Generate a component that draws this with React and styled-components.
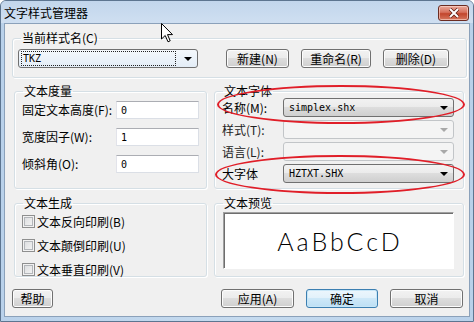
import styled, { createGlobalStyle } from "styled-components";

const GlobalStyle = createGlobalStyle`
  html, body {
    margin: 0;
    padding: 0;
    background: #ffffff;
  }
  body {
    font-family: "Noto Sans CJK SC", "Liberation Sans", sans-serif;
    font-size: 12px;
    color: #000;
  }
  * {
    box-sizing: border-box;
  }
`;

const Window = styled.div`
  position: relative;
  width: 474px;
  height: 322px;
  display: flex;
  flex-direction: column;
  background: linear-gradient(90deg, #b9d1ea, #c6dbef 50%, #b9d1ea);
  border: 1px solid #5d7590;
  border-radius: 6px 6px 0 0;
  overflow: hidden;
`;

const TitleBar = styled.div`
  height: 22px;
  flex-shrink: 0;
  display: flex;
  align-items: center;
  justify-content: space-between;
  padding: 0 4px 0 3px;
  background: linear-gradient(#c2d6ec, #cfdff1);
`;

const Title = styled.span`
  font-size: 12px;
  line-height: 14px;
  margin-top: 2px;
`;

const CloseButton = styled.div`
  width: 31px;
  height: 16px;
  margin-top: 1px;
  display: flex;
  align-items: center;
  justify-content: center;
  border: 1px solid #6b2c22;
  border-radius: 3px;
  background: linear-gradient(#e9a99b, #d7705c 45%, #c2452c 55%, #d6775f);
  box-shadow: inset 0 0 0 1px rgba(255, 220, 210, 0.6);
`;

const Body = styled.div`
  flex: 1;
  margin: 0 3px 4px 3px;
  background: #f0f0f0;
  border: 1px solid #8ba1ba;
  display: flex;
  flex-direction: column;
`;

const Group = styled.fieldset`
  margin: 0;
  padding: 0;
  min-width: 0;
  border: 1px solid #d5dfe5;
  border-radius: 3px;
  box-shadow: inset 1px 1px 0 #ffffff, 1px 1px 0 #ffffff;
`;

const Legend = styled.legend`
  margin-left: 8px;
  padding: 0 1px;
  font-size: 12px;
  line-height: 14px;
`;

const TopGroup = styled(Group)`
  margin: 7px 2px 0 7px;
`;

const TopRow = styled.div`
  display: flex;
  align-items: center;
  padding: 4px 0 9px 5px;
`;

const ButtonCluster = styled.div`
  display: flex;
  gap: ${(p) => p.$gap || 12}px;
  margin-left: ${(p) => p.$ml || 0}px;
`;

const Button = styled.div`
  width: ${(p) => p.$w}px;
  height: 19px;
  display: flex;
  align-items: center;
  justify-content: center;
  font-size: 12px;
  border: 1px solid ${(p) => (p.$default ? "#3c7fb1" : "#707070")};
  border-radius: 3px;
  background: ${(p) =>
    p.$default
      ? "linear-gradient(#ecf6fc, #e1f1fb 49%, #cde8f8 50%, #bddff4)"
      : "linear-gradient(#f2f2f2, #ebebeb 49%, #dddddd 50%, #cfcfcf)"};
  box-shadow: inset 0 0 0 1px ${(p) => (p.$default ? "#c7e6f7" : "#fcfcfc")};
`;

const Combo = styled.div`
  width: ${(p) => p.$w}px;
  height: 19px;
  display: flex;
  align-items: center;
  justify-content: space-between;
  padding: 0 5px 0 ${(p) => p.$pl || 4}px;
  border: 1px solid ${(p) => (p.$disabled ? "#c2c5c8" : "#707070")};
  border-radius: 3px;
  background: ${(p) =>
    p.$disabled
      ? "#f4f4f4"
      : p.$focus
      ? "linear-gradient(#f4f8fc, #e3edf7)"
      : "linear-gradient(#f2f2f2, #ebebeb 49%, #dddddd 50%, #cfcfcf)"};
`;

const ComboText = styled.span`
  font-family: "DejaVu Sans Mono", "Liberation Mono", monospace;
  font-size: 10px;
  line-height: 13px;
`;

const FocusText = styled(ComboText)`
  flex: 1;
  margin-right: 8px;
  padding-left: 1px;
  border: 1px dotted #222;
`;

const Arrow = styled.span`
  width: 0;
  height: 0;
  border-left: 4px solid transparent;
  border-right: 4px solid transparent;
  border-top: 4px solid ${(p) => (p.$disabled ? "#a8a8a8" : "#000")};
`;

const Columns = styled.div`
  display: flex;
  gap: 7px;
  margin: ${(p) => p.$mt}px 5px 0 9px;
`;

const LeftGroup = styled(Group)`
  width: 193px;
  flex-shrink: 0;
`;

const RightWrap = styled.div`
  position: relative;
  flex: 1;
  display: flex;
`;

const RightGroup = styled(Group)`
  flex: 1;
`;

const FieldList = styled.div`
  display: flex;
  flex-direction: column;
  gap: ${(p) => p.$gap}px;
  padding: ${(p) => p.$pad};
`;

const FieldRow = styled.div`
  display: flex;
  align-items: center;
  justify-content: space-between;
  height: ${(p) => p.$h || 18}px;
`;

const Label = styled.span`
  font-size: 12px;
  line-height: 14px;
  color: ${(p) => (p.$muted ? "#222" : "#000")};
`;

const Input = styled.div`
  width: 83px;
  height: 18px;
  display: flex;
  align-items: center;
  padding-left: 4px;
  background: #fff;
  border: 1px solid #dbdfe6;
  border-top-color: #abadb3;
  border-left-color: #e2e3ea;
`;

const CheckRow = styled.div`
  display: flex;
  align-items: center;
  gap: 2px;
  height: 13px;
`;

const CheckBox = styled.span`
  width: 13px;
  height: 13px;
  border: 1px solid #8e8f8f;
  background: linear-gradient(135deg, #d8dadc, #f7f7f7);
  box-shadow: inset 0 0 0 1px #f2f2f2, inset 0 0 0 2px #b3b6ba;
`;

const Preview = styled.div`
  height: 57px;
  margin: 2px 9px 7px 8px;
  display: flex;
  align-items: center;
  justify-content: center;
  background: #fff;
  border: 1px solid #ffffff;
  border-top-color: #a0a0a0;
  border-left-color: #a0a0a0;
  box-shadow: inset 1px 1px 0 #6e6e6e;
`;

const PreviewText = styled.span`
  font-family: Lato, "DejaVu Sans", sans-serif;
  font-weight: 300;
  font-size: 25px;
  letter-spacing: 3px;
  line-height: 28px;
  color: #000;
  padding-left: 3px;
`;

const Ellipse = styled.div`
  position: absolute;
  left: ${(p) => p.$x}px;
  top: ${(p) => p.$y}px;
  width: ${(p) => p.$w}px;
  height: ${(p) => p.$h}px;
  border: 2px solid #e01e28;
  border-radius: 50%;
  pointer-events: none;
`;

const BottomBar = styled.div`
  display: flex;
  justify-content: space-between;
  margin-top: 12px;
  padding: 0 6px 0 7px;
`;

const Cursor = styled.svg`
  position: absolute;
  left: 160px;
  top: 22px;
`;

export default function App() {
  return (
    <>
      <GlobalStyle />
      <Window>
        <TitleBar>
          <Title>文字样式管理器</Title>
          <CloseButton>
            <svg width="12" height="10" viewBox="0 0 12 10">
              <path d="M2 1 L10 9 M10 1 L2 9" stroke="#5a1a10" strokeWidth="3.4" />
              <path d="M2 1 L10 9 M10 1 L2 9" stroke="#ffffff" strokeWidth="2" />
            </svg>
          </CloseButton>
        </TitleBar>
        <Body>
          <TopGroup>
            <Legend>当前样式名(C)</Legend>
            <TopRow>
              <Combo $w={180} $focus $pl={2}>
                <FocusText>TKZ</FocusText>
                <Arrow />
              </Combo>
              <ButtonCluster $ml={28} $gap={12}>
                <Button $w={63}>新建(N)</Button>
                <Button $w={70}>重命名(R)</Button>
                <Button $w={66}>删除(D)</Button>
              </ButtonCluster>
            </TopRow>
          </TopGroup>

          <Columns $mt={6}>
            <LeftGroup>
              <Legend>文本度量</Legend>
              <FieldList $gap={9} $pad="3px 7px 15px 7px">
                <FieldRow>
                  <Label>固定文本高度(F):</Label>
                  <Input>
                    <ComboText>0</ComboText>
                  </Input>
                </FieldRow>
                <FieldRow>
                  <Label>宽度因子(W):</Label>
                  <Input>
                    <ComboText>1</ComboText>
                  </Input>
                </FieldRow>
                <FieldRow>
                  <Label>倾斜角(O):</Label>
                  <Input>
                    <ComboText>0</ComboText>
                  </Input>
                </FieldRow>
              </FieldList>
            </LeftGroup>
            <RightWrap>
              <RightGroup>
                <Legend>文本字体</Legend>
                <FieldList $gap={3} $pad="0 9px 5px 7px">
                  <FieldRow $h={19}>
                    <Label>名称(M):</Label>
                    <Combo $w={171} $pl={5}>
                      <ComboText>simplex.shx</ComboText>
                      <Arrow />
                    </Combo>
                  </FieldRow>
                  <FieldRow $h={19}>
                    <Label $muted>样式(T):</Label>
                    <Combo $w={171} $disabled>
                      <ComboText />
                      <Arrow $disabled />
                    </Combo>
                  </FieldRow>
                  <FieldRow $h={19}>
                    <Label $muted>语言(L):</Label>
                    <Combo $w={171} $disabled>
                      <ComboText />
                      <Arrow $disabled />
                    </Combo>
                  </FieldRow>
                  <FieldRow $h={19}>
                    <Label>大字体</Label>
                    <Combo $w={171} $pl={5}>
                      <ComboText>HZTXT.SHX</ComboText>
                      <Arrow />
                    </Combo>
                  </FieldRow>
                </FieldList>
              </RightGroup>
              <Ellipse $x={3} $y={1} $w={248} $h={39} />
              <Ellipse $x={1} $y={71} $w={250} $h={39} />
            </RightWrap>
          </Columns>

          <Columns $mt={7}>
            <LeftGroup>
              <Legend>文本生成</Legend>
              <FieldList $gap={11} $pad="5px 7px 0 7px">
                <CheckRow>
                  <CheckBox />
                  <Label>文本反向印刷(B)</Label>
                </CheckRow>
                <CheckRow>
                  <CheckBox />
                  <Label>文本颠倒印刷(U)</Label>
                </CheckRow>
                <CheckRow>
                  <CheckBox />
                  <Label>文本垂直印刷(V)</Label>
                </CheckRow>
              </FieldList>
            </LeftGroup>
            <RightGroup>
              <Legend>文本预览</Legend>
              <Preview>
                <PreviewText>AaBbCcD</PreviewText>
              </Preview>
            </RightGroup>
          </Columns>

          <BottomBar>
            <Button $w={41}>帮助</Button>
            <ButtonCluster $gap={12}>
              <Button $w={73}>应用(A)</Button>
              <Button $w={72} $default>
                确定
              </Button>
              <Button $w={73}>取消</Button>
            </ButtonCluster>
          </BottomBar>
        </Body>
        <Cursor width="13" height="20" viewBox="0 0 13 20">
          <path
            d="M0.5 0.5 L0.5 16 L4.2 12.5 L7 18.8 L9.2 17.8 L6.5 11.6 L11.5 11.6 Z"
            fill="#ffffff"
            stroke="#000000"
            strokeWidth="1"
          />
        </Cursor>
      </Window>
    </>
  );
}
